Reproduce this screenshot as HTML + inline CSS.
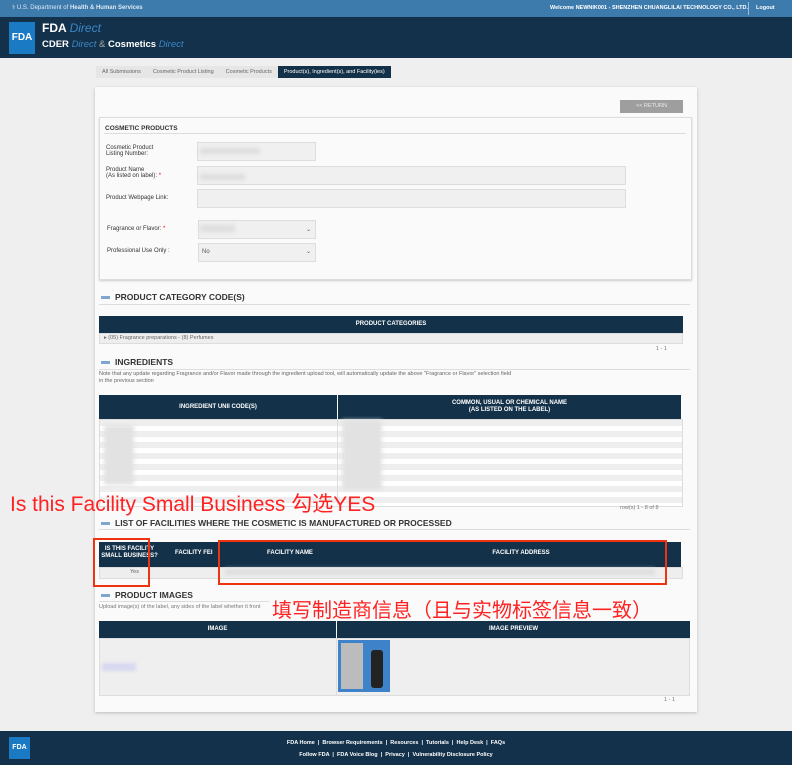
<!DOCTYPE html><html><head><meta charset="utf-8"><style>
body{margin:0;width:792px;height:765px;background:#efefef;font-family:"Liberation Sans","Noto Sans CJK SC",sans-serif;position:relative;overflow:hidden}
.a{position:absolute}
.th{background:#13324a;color:#fff;font-size:6px;font-weight:bold;text-align:center}
.sec{font-size:8.5px;font-weight:bold;color:#333}
.sec:before{content:"";display:inline-block;width:9px;height:3px;background:#7fa6cf;margin-right:5px;vertical-align:middle}
.lbl{font-size:6px;color:#333}
.inp{background:#f0f0f0;border:1px solid #ddd}
.blur{background:#ddd;filter:blur(2px)}
.red{color:#f22;}
.box{border:2px solid #e31;}
</style></head><body>
<div class="a" style="left:0;top:0;width:792px;height:17px;background:#3e7bad"></div>
<div class="a" style="left:12px;top:4px;color:#dfe9f3;font-size:6px">⚕ U.S. Department of <b>Health &amp; Human Services</b></div>
<div class="a" style="left:550px;top:5px;color:#fff;font-size:5.5px;font-weight:bold">Welcome NEWNIK001 - SHENZHEN CHUANGLILAI TECHNOLOGY CO., LTD.</div>
<div class="a" style="left:748px;top:2px;width:1px;height:13px;background:#9bbbd6"></div>
<div class="a" style="left:756px;top:5px;color:#fff;font-size:5.5px;font-weight:bold">Logout</div>
<div class="a" style="left:0;top:17px;width:792px;height:41px;background:#13314a"></div>
<div class="a" style="left:9px;top:22px;width:26px;height:32px;background:#1a7ac4;color:#fff;font-size:10px;font-weight:bold;line-height:32px;text-align:center">FDA</div>
<div class="a" style="left:42px;top:21px;color:#fff;font-size:12px;font-weight:bold">FDA <i style="font-weight:normal;color:#3b87c7">Direct</i></div>
<div class="a" style="left:42px;top:39px;color:#fff;font-size:9.5px;font-weight:bold">CDER <i style="font-weight:normal;color:#3b87c7">Direct</i> <span style="font-weight:normal;color:#aaa">&amp;</span> Cosmetics <i style="font-weight:normal;color:#3b87c7">Direct</i></div>
<div class="a" style="left:96px;top:66px;font-size:5.5px;color:#666;display:flex;gap:0">
<span style="background:#e6e6e6;padding:3px 6px">All Submissions</span><span style="background:#e6e6e6;padding:3px 6px">Cosmetic Product Listing</span><span style="background:#e6e6e6;padding:3px 6px">Cosmetic Products</span><span style="background:#13324a;color:#fff;padding:3px 6px">Product(s), Ingredient(s), and Facility(ies)</span></div>
<div class="a" style="left:95px;top:87px;width:602px;height:625px;background:#fafafa;box-shadow:0 1px 3px #bbb"></div>
<div class="a" style="left:620px;top:100px;width:63px;height:13px;background:#9e9e9e;color:#eee;font-size:5.5px;line-height:13px;text-align:center">&lt;&lt; RETURN</div>
<div class="a" style="left:99px;top:117px;width:591px;height:161px;background:#fafafa;border:1px solid #ddd;box-shadow:0 1px 2px #ccc"></div>
<div class="a" style="left:105px;top:125px;font-size:6.5px;font-weight:bold;color:#333">COSMETIC PRODUCTS</div>
<div class="a" style="left:104px;top:133px;width:582px;height:1px;background:#ddd"></div>
<div class="a lbl" style="left:106px;top:145px">Cosmetic Product<br>Listing Number:</div>
<div class="a inp" style="left:197px;top:142px;width:117px;height:17px"></div>
<div class="a blur" style="left:200px;top:148px;width:60px;height:6px"></div>
<div class="a lbl" style="left:106px;top:167px">Product Name<br>(As listed on label): <span style="color:red">*</span></div>
<div class="a inp" style="left:197px;top:166px;width:427px;height:17px"></div>
<div class="a blur" style="left:200px;top:174px;width:45px;height:6px"></div>
<div class="a lbl" style="left:106px;top:195px">Product Webpage Link:</div>
<div class="a inp" style="left:197px;top:189px;width:427px;height:17px"></div>
<div class="a lbl" style="left:107px;top:226px">Fragrance or Flavor: <span style="color:red">*</span></div>
<div class="a inp" style="left:198px;top:220px;width:116px;height:17px"></div>
<div class="a blur" style="left:200px;top:225px;width:35px;height:7px"></div>
<div class="a lbl" style="left:107px;top:248px">Professional Use Only :</div>
<div class="a inp" style="left:198px;top:243px;width:116px;height:17px;font-size:6px;color:#555;line-height:17px;text-indent:3px">No</div>
<div class="a" style="left:306px;top:226px;font-size:6px;color:#555">⌄</div>
<div class="a" style="left:306px;top:248px;font-size:6px;color:#555">⌄</div>
<div class="a sec" style="left:101px;top:292px">PRODUCT CATEGORY CODE(S)</div>
<div class="a" style="left:99px;top:304px;width:591px;height:1px;background:#ddd"></div>
<div class="a th" style="left:99px;top:316px;width:584px;height:17px;line-height:17px">PRODUCT CATEGORIES</div>
<div class="a" style="left:99px;top:333px;width:582px;height:9px;background:#eee;border:1px solid #ddd;font-size:5.5px;color:#666;text-indent:4px;line-height:9px">▸ (05) Fragrance preparations - (8) Perfumes</div>
<div class="a" style="left:656px;top:346px;font-size:5.5px;color:#777">1 - 1</div>
<div class="a sec" style="left:101px;top:357px">INGREDIENTS</div>
<div class="a" style="left:99px;top:369px;width:591px;height:1px;background:#ddd"></div>
<div class="a" style="left:99px;top:371px;font-size:5.5px;color:#666;line-height:7px">Note that any update regarding Fragrance and/or Flavor made through the ingredient upload tool, will automatically update the above "Fragrance or Flavor" selection field<br>in the previous section</div>
<div class="a th" style="left:99px;top:395px;width:238px;height:24px;line-height:24px">INGREDIENT UNII CODE(S)</div>
<div class="a th" style="left:338px;top:395px;width:343px;height:24px;padding-top:5px;box-sizing:border-box;line-height:7px">COMMON, USUAL OR CHEMICAL NAME<br>(AS LISTED ON THE LABEL)</div>
<div class="a" style="left:99px;top:419px;width:582px;height:86px;background:repeating-linear-gradient(#eee 0 6px,#fff 6px 11px);border:1px solid #ddd"></div>
<div class="a" style="left:337px;top:419px;width:1px;height:86px;background:#ddd"></div>
<div class="a blur" style="left:104px;top:425px;width:30px;height:60px;background:#e2e2e2"></div>
<div class="a blur" style="left:342px;top:420px;width:40px;height:70px;background:#e2e2e2"></div>
<div class="a" style="left:620px;top:505px;font-size:5.5px;color:#777">row(s) 1 - 8 of 8</div>
<div class="a red" style="left:10px;top:488px;font-size:21px">Is this Facility Small Business 勾选YES</div>
<div class="a sec" style="left:101px;top:518px">LIST OF FACILITIES WHERE THE COSMETIC IS MANUFACTURED OR PROCESSED</div>
<div class="a" style="left:99px;top:529px;width:591px;height:1px;background:#ddd"></div>
<div class="a th" style="left:99px;top:542px;width:582px;height:25px"></div>
<div class="a th" style="left:99px;top:546px;width:61px;line-height:7px;background:none">IS THIS FACILITY<br>SMALL BUSINESS?</div>
<div class="a th" style="left:175px;top:550px;background:none">FACILITY FEI</div>
<div class="a th" style="left:220px;top:550px;width:140px;background:none">FACILITY NAME</div>
<div class="a th" style="left:361px;top:550px;width:320px;background:none">FACILITY ADDRESS</div>
<div class="a" style="left:99px;top:567px;width:582px;height:10px;background:#eee;border:1px solid #ddd"></div>
<div class="a" style="left:130px;top:569px;font-size:5.5px;color:#666">Yes</div>
<div class="a blur" style="left:225px;top:569px;width:430px;height:6px;background:#ddd"></div>
<div class="a box" style="left:93px;top:538px;width:53px;height:45px"></div>
<div class="a box" style="left:218px;top:540px;width:445px;height:41px"></div>
<div class="a sec" style="left:101px;top:590px">PRODUCT IMAGES</div>
<div class="a" style="left:99px;top:601px;width:170px;height:1px;background:#ddd"></div>
<div class="a" style="left:99px;top:604px;font-size:5.5px;color:#777">Upload image(s) of the label, any sides of the label whether it front</div>
<div class="a red" style="left:272px;top:594px;font-size:20px">填写制造商信息（且与实物标签信息一致）</div>
<div class="a th" style="left:99px;top:621px;width:237px;height:17px;line-height:17px">IMAGE</div>
<div class="a th" style="left:337px;top:621px;width:353px;height:17px;line-height:17px">IMAGE PREVIEW</div>
<div class="a" style="left:99px;top:638px;width:589px;height:56px;background:#efefef;border:1px solid #ddd"></div>
<div class="a" style="left:336px;top:638px;width:1px;height:57px;background:#ddd"></div>
<div class="a" style="left:102px;top:663px;width:34px;height:8px;background:#d8d8f0;filter:blur(1.5px)"></div>
<div class="a" style="left:338px;top:640px;width:52px;height:52px;background:#3e83c9"></div>
<div class="a" style="left:341px;top:643px;width:22px;height:46px;background:#bcbcbc"></div>
<div class="a" style="left:371px;top:650px;width:12px;height:38px;background:#222;border-radius:3px"></div>
<div class="a" style="left:664px;top:697px;font-size:5.5px;color:#777">1 - 1</div>
<div class="a" style="left:0;top:731px;width:792px;height:34px;background:#13314a"></div>
<div class="a" style="left:9px;top:737px;width:21px;height:22px;background:#1a7ac4;color:#fff;font-size:7px;font-weight:bold;line-height:22px;text-align:center">FDA</div>
<div class="a" style="left:0;top:737px;width:792px;text-align:center;color:#fff;font-size:5.5px;font-weight:bold;line-height:12px">FDA Home &nbsp;|&nbsp; Browser Requirements &nbsp;|&nbsp; Resources &nbsp;|&nbsp; Tutorials &nbsp;|&nbsp; Help Desk &nbsp;|&nbsp; FAQs<br>Follow FDA &nbsp;|&nbsp; FDA Voice Blog &nbsp;|&nbsp; Privacy &nbsp;|&nbsp; Vulnerability Disclosure Policy</div>
</body></html>
